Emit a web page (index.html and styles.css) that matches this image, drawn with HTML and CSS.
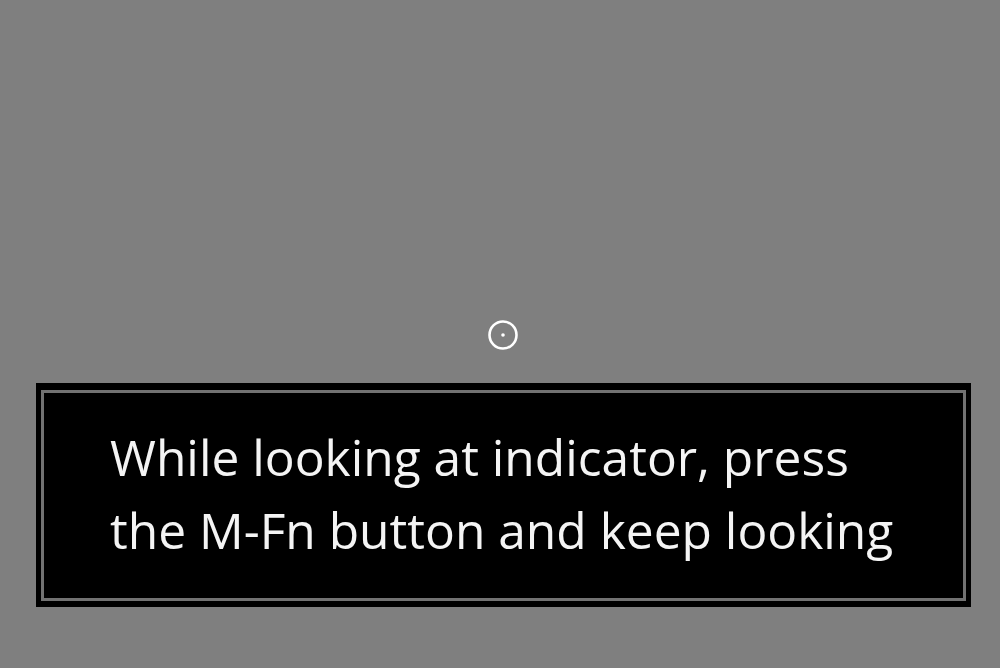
FILE: index.html
```html
<!DOCTYPE html>
<html lang="en">
<head>
    <meta charset="UTF-8">
    <title>Eye AF calibration</title>
    <link rel="stylesheet" href="styles.css">
</head>
<body>
    <div class="screen">
        <div class="indicator">
            <svg width="32" height="32" viewBox="0 0 32 32">
                <circle cx="16" cy="16" r="13.5" fill="none" stroke="#fff" stroke-width="2.6"/>
                <circle cx="16" cy="16" r="1.8" fill="#fff"/>
            </svg>
        </div>
        <div class="message">
            <div class="message-inner">
                <p>While looking at indicator, press<br>the M-Fn button and keep looking</p>
            </div>
        </div>
    </div>
</body>
</html>
```

FILE: styles.css
```css
html, body {
    margin: 0;
    padding: 0;
    background: #7f7f7f;
}
.screen {
    width: 1000px;
    height: 668px;
    display: flex;
    flex-direction: column;
    align-items: flex-start;
}
.indicator {
    margin: 319px 0 0 487px;
    width: 32px;
    height: 32px;
}
.indicator svg {
    display: block;
}
.message {
    margin: 32px 0 0 36px;
    width: 935px;
    height: 224px;
    box-sizing: border-box;
    background: #000;
    padding: 7px 5px 6px 5px;
}
.message-inner {
    height: 100%;
    box-sizing: border-box;
    border: 3px solid #727272;
    padding: 28px 0 0 66px;
}
.message p {
    margin: 0;
    color: #f4f4f4;
    font-family: "Open Sans", sans-serif;
    font-size: 49.7px;
    line-height: 73px;
}
```
